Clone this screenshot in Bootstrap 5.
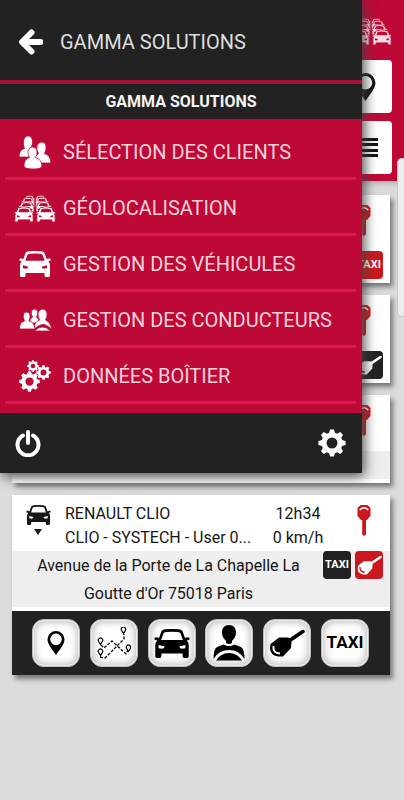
<!DOCTYPE html>
<html lang="fr">
<head>
<meta charset="utf-8">
<meta name="viewport" content="width=device-width, initial-scale=1">
<title>Gamma Solutions</title>
<link href="https://cdn.jsdelivr.net/npm/bootstrap@5.3.0/dist/css/bootstrap.min.css" rel="stylesheet">
<style>
:root { --brand: #be0836; --ink: #222; }
body { font-family: Roboto, "Liberation Sans", sans-serif; background: #dcdcdc; color: #161616; min-height: 100vh; }
svg { display: block; fill: currentColor; flex: none; }
.topbar { background: var(--brand); color: #f8dce2; padding: 18px 12px 7px; gap: 8px; box-shadow: 0 2px 6px #8889; }
.topbar .fleet { margin-bottom: 7px; }
.fleet { --hole: var(--brand); }
.square-btn { width: 53px; height: 53px; background: linear-gradient(90deg, #e6e6e6, #fff 70%); border: 0; border-radius: 4px; color: #111; padding: 0; }
.vehicles { padding: 14px 14px 24px 12px; gap: 12px; }
.vehicle { background: #fff; min-height: 88px; box-shadow: 3px 4px 5px #777; }
.v-head { height: 56px; padding: 6px 19px 0 13px; font-size: 16px; line-height: 24px; }
.v-lines { padding-top: 1px; }
.v-icon { width: 26px; margin-right: 14px; padding-top: 4px; }
.v-time { width: 58px; }
.v-key { color: #cb181e; margin: 4px 0 0 30px; }
.v-address { background: #eee; padding-right: 7px; margin-bottom: 4px; font-size: 16px; line-height: 28px; min-height: 28px; }
.v-address.plain { background: #fff; }
.v-address p { padding: 1px 20px 0 22px; margin-bottom: -1px; }
.tag { width: 28px; height: 28px; border-radius: 4px; font-size: 11px; line-height: 28px; font-weight: 700; color: #fff; }
.tag-dark { background: var(--ink); }
.tag-red { background: #cb181e; }
.tools { background: var(--ink); padding: 8px 21px 8px 20px; }
.tool { width: 48px; height: 48px; border: 1px solid #bbb; border-radius: 12px; color: #000; padding: 0; font-size: 17px; font-weight: 700;
  background: #fff; box-shadow: inset 0 0 0 1px #eee, inset 0 0 8px 1px #aaa; }
.drawer { width: calc(100% - 42px); background: var(--brand); box-shadow: 2px 3px 12px #444; z-index: 5; }
.d-head { background: var(--ink); height: 84px; border-bottom: 4px solid #a81137; padding: 3px 18px 0; gap: 17px; color: #dedede; }
.d-head h1 { font-size: 20px; font-weight: 400; }
.d-head button, .d-foot button { background: none; border: 0; padding: 0; color: #fff; }
.d-client { background: var(--ink); color: #f4f4f4; font-size: 16px; line-height: 35px; font-weight: 700; }
.d-menu { padding: 5px 6px 9px 5px; }
.d-menu a { height: 56px; border-bottom: 3px solid #de184b; color: #f9d3dc; font-size: 20px; padding: 3px 0 0 9px; text-decoration: none; white-space: nowrap; }
.d-menu .glyph { width: 42px; margin-right: 7px; color: #fff; flex: none; }
.d-foot { background: var(--ink); height: 60px; padding: 0 16px 0 15px; }
.scroll-thumb { right: 0; top: 158px; width: 7px; height: 159px; background: #ededed; border: 1px solid #c8c8c8; border-right: 0; border-radius: 5px 0 0 5px; z-index: 6; }
</style>
<script src="https://cdn.jsdelivr.net/npm/bootstrap@5.3.0/dist/js/bootstrap.bundle.min.js"></script>
</head>
<body>
<svg width="0" height="0" class="position-absolute" aria-hidden="true">
  <symbol id="car" viewBox="0 0 32 26"><path fill-rule="evenodd" d="M6.500 2Q7.400 .5 10 .3Q16-.2 22 .3Q24.600 .5 25.500 2L27.600 8Q29 7.200 31 7.600Q32.300 8.400 31.500 9.500L29.300 10.500Q31 12 31 14.500V24.500Q31 26 29.500 26H27Q25.500 26 25.500 24.500V22H6.500V24.500Q6.500 26 5 26H2.500Q1 26 1 24.500V14.500Q1 12 2.700 10.500L.5 9.500Q-.3 8.400 1 7.600Q3 7.200 4.400 8ZM8.600 3.400L6.300 9.800H25.700L23.400 3.400Q22.600 2.500 16 2.400Q9.400 2.500 8.600 3.400ZM4 14.300L9.500 15.700Q9 17.800 7 17.800L4 17.200ZM28 14.300L22.500 15.700Q23 17.800 25 17.800L28 17.200Z"/></symbol>
  <symbol id="car-s" viewBox="-1 -1 34 27"><path d="M6 2Q16-2 26 2L29 9L32 8.500V11L30.500 12L31.500 15V26H26V22.500H6V26H.5V15L1.500 12L0 11V8.500L3 9Z" stroke="var(--hole)" stroke-width="1.500"/><path fill="var(--hole)" d="M8.500 4Q16 2 23.500 4L25.500 9.500H6.500ZM4 14.500L9 16L8 18H4ZM28 14.500L23 16L24 18H28Z"/></symbol>
  <symbol id="fleet" viewBox="0 0 42 27"><use href="#car-s" x="10" y="0" width="11" height="9"/><use href="#car-s" x="21" y="0" width="11" height="9"/><use href="#car-s" x="7" y="2" width="14" height="11"/><use href="#car-s" x="21" y="2" width="14" height="11"/><use href="#car-s" x="4" y="6" width="17" height="13"/><use href="#car-s" x="21" y="6" width="17" height="13"/><use href="#car-s" x="0" y="11" width="20" height="16"/><use href="#car-s" x="22" y="11" width="20" height="16"/></symbol>
  <symbol id="pin" viewBox="0 0 18 24"><path fill-rule="evenodd" d="M9 0A8.500 8.500 0 0 1 17.500 8.500C17.500 13 13 18 9 24C5 18 .5 13 .5 8.500A8.500 8.500 0 0 1 9 0ZM9 2.500A5.800 5.800 0 1 0 9 14.100A5.800 5.800 0 1 0 9 2.500Z"/></symbol>
  <symbol id="gear" viewBox="-14 -14 28 28"><circle r="8" fill="none" stroke="currentColor" stroke-width="5"/><path id="tooth" d="M-3.300-9L-1.900-13.600H1.900L3.300-9ZM-3.300 9L-1.900 13.600H1.900L3.300 9Z"/><use href="#tooth" transform="rotate(45)"/><use href="#tooth" transform="rotate(90)"/><use href="#tooth" transform="rotate(135)"/></symbol>
  <symbol id="keypin" viewBox="0 0 14 31"><path d="M3.500 0H10.500L13.500 3V11L10 15H9V29.500Q7 32 5.200 29.500V15H4L.5 11V3Z"/><path d="M2.800 5Q7 .5 11.200 5" fill="none" stroke="#fff" stroke-width="1.500"/></symbol>
  <symbol id="ball" viewBox="0 0 36 28"><path d="M21 9L32.500 1.300Q35-.2 35.700 2Q36 3.300 34.500 4.200L22.500 12.500L22 19L14 27.500H9Q1 26 1 19L1.500 15L10 8.500H18Z"/><path d="M4.500 17Q3.500 24 11 24.500" fill="none" stroke="var(--shine)" stroke-width="2"/></symbol>
</svg>

<header class="topbar d-flex flex-column align-items-end">
  <svg class="fleet" width="42" height="27"><use href="#fleet"/></svg>
  <button class="square-btn d-flex align-items-center justify-content-center" type="button" aria-label="Carte"><svg width="21" height="28"><use href="#pin"/></svg></button>
  <button class="square-btn d-flex align-items-center justify-content-center" type="button" aria-label="Liste"><svg width="24" height="20" viewBox="0 0 24 20"><path d="M0 0H24V3H0ZM0 5H24V8H0ZM0 11H24V14H0ZM0 16H24V19H0Z"/></svg></button>
</header>

<main class="vehicles d-flex flex-column">
  <article class="vehicle">
    <div class="v-head d-flex justify-content-end"><svg class="v-key" width="14" height="31"><use href="#keypin"/></svg></div>
    <div class="v-address plain d-flex justify-content-end"><span class="tag tag-red text-center">TAXI</span></div>
  </article>
  <article class="vehicle">
    <div class="v-head d-flex justify-content-end"><svg class="v-key" width="14" height="31"><use href="#keypin"/></svg></div>
    <div class="v-address plain d-flex justify-content-end"><span class="tag tag-dark d-flex align-items-center justify-content-center"><svg width="25" height="20" style="--shine:#222"><use href="#ball"/></svg></span></div>
  </article>
  <article class="vehicle">
    <div class="v-head d-flex justify-content-end"><svg class="v-key" width="14" height="31"><use href="#keypin"/></svg></div>
    <div class="v-address"></div>
  </article>
  <article class="vehicle">
    <div class="v-head d-flex">
      <div class="v-icon d-flex flex-column align-items-center gap-1"><svg width="25" height="20"><use href="#car"/></svg><svg width="8" height="6" viewBox="0 0 8 6"><path d="M0 0H8L4 6Z"/></svg></div>
      <div class="v-lines flex-grow-1 text-nowrap">RENAULT CLIO<br>CLIO - SYSTECH - User 0...</div>
      <div class="v-lines v-time text-center flex-shrink-0">12h34<br>0 km/h</div>
      <svg class="v-key" width="14" height="31"><use href="#keypin"/></svg>
    </div>
    <div class="v-address d-flex">
      <p class="flex-grow-1 text-center">Avenue de la Porte de La Chapelle La Goutte d'Or 75018 Paris</p>
      <div class="d-flex gap-1">
        <span class="tag tag-dark text-center">TAXI</span>
        <span class="tag tag-red d-flex align-items-center justify-content-center"><svg width="25" height="20" style="--shine:#cb181e"><use href="#ball"/></svg></span>
      </div>
    </div>
    <div class="tools d-flex justify-content-between">
      <button class="tool d-flex align-items-center justify-content-center" type="button" aria-label="Position"><svg width="18" height="24"><use href="#pin"/></svg></button>
      <button class="tool d-flex align-items-center justify-content-center" type="button" aria-label="Trajets"><svg width="34" height="32" viewBox="0 0 34 32"><path d="M3 30L8 31L27 12V7M4 18L7 21L15 14L29 27L31 23" fill="none" stroke="currentColor" stroke-width="1.300" stroke-dasharray="3 1.500"/><g fill="#fff" stroke="currentColor" stroke-width="1.200"><path id="mini" d="M26.500 6.500L24.700 3.500A2.200 2.200 0 1 1 28.300 3.500Z"/><use href="#mini" x="-23" y="11"/><use href="#mini" x="-23" y="22"/><use href="#mini" x="5" y="18"/></g></svg></button>
      <button class="tool d-flex align-items-center justify-content-center" type="button" aria-label="Véhicule"><svg width="36" height="29"><use href="#car"/></svg></button>
      <button class="tool d-flex align-items-center justify-content-center" type="button" aria-label="Conducteur"><svg width="32" height="36" viewBox="0 0 32 36"><path d="M16 0C20.500 0 23 3 23 7.500C23 11 21.500 13.500 19 16V18Q16 20 13 18V16C10.500 13.500 9 11 9 7.500C9 3 11.500 0 16 0ZM10.500 19.500Q16 22.500 21.500 19.500L28 22Q31.500 24 31.500 34Q26 25 16 25Q6 25 .5 34Q.5 24 4 22ZM3 35.500Q7.500 28 16 28Q24.500 28 29 35.500Z"/></svg></button>
      <button class="tool d-flex align-items-center justify-content-center" type="button" aria-label="Clé"><svg width="36" height="28" style="--shine:#fff"><use href="#ball"/></svg></button>
      <button class="tool d-flex align-items-center justify-content-center" type="button">TAXI</button>
    </div>
  </article>
</main>

<nav class="drawer position-absolute top-0 start-0" aria-label="Menu principal">
  <div class="d-head d-flex align-items-center">
    <button type="button" aria-label="Retour"><svg width="25" height="26" viewBox="0 0 25 26"><path d="M13.500 3.500L4 13L13.500 22.500M5 13H22.500" fill="none" stroke="currentColor" stroke-width="6" stroke-linejoin="round" stroke-linecap="round"/></svg></button>
    <h1 class="mb-0">GAMMA SOLUTIONS</h1>
  </div>
  <div class="d-client text-center">GAMMA SOLUTIONS</div>
  <div class="d-menu">
    <a class="d-flex align-items-center" href="#clients"><span class="glyph d-flex justify-content-center"><svg width="32" height="33" viewBox="0 0 32 33"><g stroke="#be0836" stroke-width=".8"><path d="M0 21Q0 14 5.500 12.500Q4 9 4.500 5Q5.500 0 9 0Q13 0 13.500 5Q13.500 9.500 12 12.500Q17 14 17 21Z"/><path d="M15 27Q15 20 19.500 17.500Q17 13 18 10Q19.500 6 22.500 6Q26.500 6 27 10Q27.500 14 25.500 17.500Q31.500 19 32 27Z"/><path d="M5 30Q5 23 10.500 21.500Q8.500 18 9 15Q10 11 13.500 11Q17.500 11 18 15Q18.500 19 16.500 21.500Q22.500 23 23 30Q23 33 14 33Q5 33 5 30Z"/></g></svg></span>SÉLECTION DES CLIENTS</a>
    <a class="d-flex align-items-center" href="#geo"><span class="glyph"><svg class="fleet" width="42" height="27"><use href="#fleet"/></svg></span>GÉOLOCALISATION</a>
    <a class="d-flex align-items-center" href="#vehicules"><span class="glyph d-flex justify-content-center"><svg width="32" height="26"><use href="#car"/></svg></span>GESTION DES VÉHICULES</a>
    <a class="d-flex align-items-center" href="#conducteurs"><span class="glyph d-flex justify-content-center"><svg width="33" height="23" viewBox="0 0 32 23"><g stroke="#be0836" stroke-width=".8"><path d="M10 14Q10 10 13 8Q11 5 12 2Q15-2 18 2Q19 5 17 8Q20 10 20 14Z"/><path d="M0 20Q0 13 5 12Q3 8 4 5Q6 1.500 10 4Q11.500 8 9.500 12Q15 13 15.500 20Z"/><path d="M15 18Q15 13 20 11Q18 7 18.500 4Q20 0 23 0Q26.500 0 27.500 4Q28 8 26 11Q31 13 32 20L28 17Q23 13 16 19Z"/><path d="M15 22Q23 14 31 22Z"/></g></svg></span>GESTION DES CONDUCTEURS</a>
    <a class="d-flex align-items-center" href="#boitier"><span class="glyph d-flex justify-content-center"><svg width="32" height="32" viewBox="0 0 32 32"><use href="#gear" x="0" y="11" width="21" height="21"/><use href="#gear" x="8" y="0" width="12" height="12"/><use href="#gear" x="17" y="5" width="15" height="15"/></svg></span>DONNÉES BOÎTIER</a>
  </div>
  <div class="d-foot d-flex align-items-center justify-content-between">
    <button type="button" aria-label="Déconnexion"><svg width="26" height="27" viewBox="0 0 26 27"><path d="M8 5.500A10.500 10.500 0 1 0 18 5.500M13 2V13" fill="none" stroke="currentColor" stroke-width="4" stroke-linecap="round"/></svg></button>
    <button type="button" aria-label="Paramètres"><svg width="28" height="28"><use href="#gear"/></svg></button>
  </div>
</nav>
<div class="scroll-thumb position-absolute"></div>
</body>
</html>
